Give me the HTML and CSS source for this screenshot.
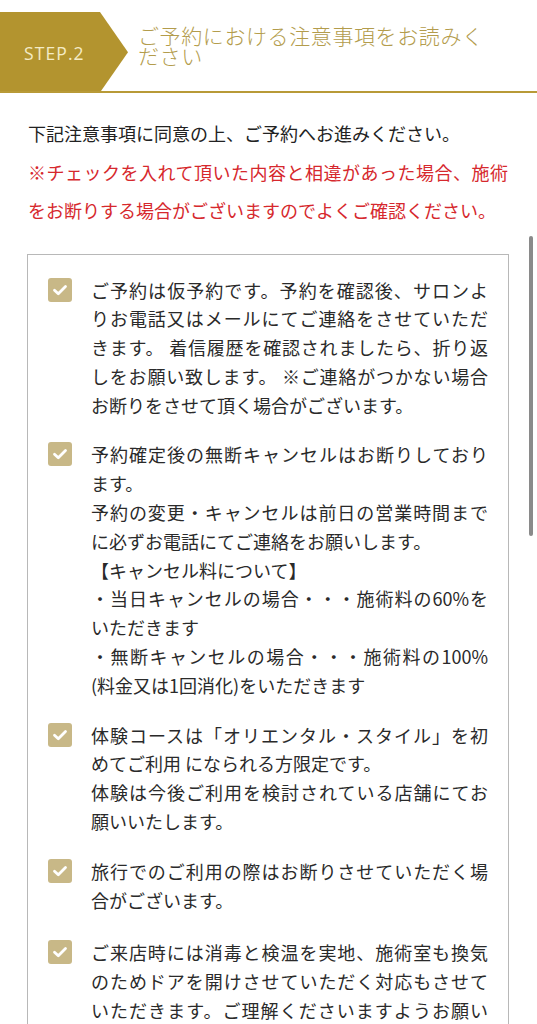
FILE: index.html
```html
<!DOCTYPE html>
<html lang="ja">
<head>
<meta charset="utf-8">
<title>STEP.2</title>
<link rel="stylesheet" href="styles.css">
</head>
<body>
<header class="step">
  <div class="badge">STEP.2</div>
  <h1 class="title">ご予約における注意事項をお読みください</h1>
</header>

<main class="content">
  <p class="intro">下記注意事項に同意の上、ご予約へお進みください。</p>
  <p class="note">※チェックを入れて頂いた内容と相違があった場合、施術をお断りする場合がございますのでよくご確認ください。</p>

  <div class="terms">
    <label class="item">
      <span class="check"><svg viewBox="0 0 24 24" width="24" height="24"><path d="M6.5 12.2 L10.3 15.8 L17.5 8.6" fill="none" stroke="#fff" stroke-width="2.8" stroke-linecap="round" stroke-linejoin="round"/></svg></span>
      <span class="text">
        <span class="ln">ご予約は仮予約です。予約を確認後、サロンよ</span>
        <span class="ln">りお電話又はメールにてご連絡をさせていただ</span>
        <span class="ln">きます。 着信履歴を確認されましたら、折り返</span>
        <span class="ln">しをお願い致します。 ※ご連絡がつかない場合</span>
        <span class="ln end">お断りをさせて頂く場合がございます。</span>
      </span>
    </label>

    <label class="item">
      <span class="check"><svg viewBox="0 0 24 24" width="24" height="24"><path d="M6.5 12.2 L10.3 15.8 L17.5 8.6" fill="none" stroke="#fff" stroke-width="2.8" stroke-linecap="round" stroke-linejoin="round"/></svg></span>
      <span class="text">
        <span class="ln">予約確定後の無断キャンセルはお断りしており</span>
        <span class="ln end">ます。</span>
        <span class="ln">予約の変更・キャンセルは前日の営業時間まで</span>
        <span class="ln end">に必ずお電話にてご連絡をお願いします。</span>
        <span class="ln end">【キャンセル料について】</span>
        <span class="ln">・当日キャンセルの場合・・・施術料の60%を</span>
        <span class="ln end">いただきます</span>
        <span class="ln">・無断キャンセルの場合・・・施術料の100%</span>
        <span class="ln end">(料金又は1回消化)をいただきます</span>
      </span>
    </label>

    <label class="item">
      <span class="check"><svg viewBox="0 0 24 24" width="24" height="24"><path d="M6.5 12.2 L10.3 15.8 L17.5 8.6" fill="none" stroke="#fff" stroke-width="2.8" stroke-linecap="round" stroke-linejoin="round"/></svg></span>
      <span class="text">
        <span class="ln">体験コースは「オリエンタル・スタイル」を初</span>
        <span class="ln end">めてご利用 になられる方限定です。</span>
        <span class="ln">体験は今後ご利用を検討されている店舗にてお</span>
        <span class="ln end">願いいたします。</span>
      </span>
    </label>

    <label class="item">
      <span class="check"><svg viewBox="0 0 24 24" width="24" height="24"><path d="M6.5 12.2 L10.3 15.8 L17.5 8.6" fill="none" stroke="#fff" stroke-width="2.8" stroke-linecap="round" stroke-linejoin="round"/></svg></span>
      <span class="text">
        <span class="ln">旅行でのご利用の際はお断りさせていただく場</span>
        <span class="ln end">合がございます。</span>
      </span>
    </label>

    <label class="item">
      <span class="check"><svg viewBox="0 0 24 24" width="24" height="24"><path d="M6.5 12.2 L10.3 15.8 L17.5 8.6" fill="none" stroke="#fff" stroke-width="2.8" stroke-linecap="round" stroke-linejoin="round"/></svg></span>
      <span class="text">
        <span class="ln">ご来店時には消毒と検温を実地、施術室も換気</span>
        <span class="ln">のためドアを開けさせていただく対応もさせて</span>
        <span class="ln">いただきます。ご理解くださいますようお願い</span>
        <span class="ln end">いたします。</span>
      </span>
    </label>
  </div>
</main>

<div class="scroll-indicator"></div>
</body>
</html>
```

FILE: styles.css
```css
html, body {
  margin: 0;
  padding: 0;
  background: #fff;
}

body {
  position: relative;
  font-family: "Noto Sans CJK JP", "Noto Sans", sans-serif;
  color: #262626;
}

/* ---------- step header ---------- */
.step {
  display: flex;
  margin-top: 12px;
  height: 79px;
  border-bottom: 2px solid #b89a37;
}

.badge {
  flex: 0 0 128px;
  display: flex;
  align-items: center;
  padding-left: 24px;
  padding-top: 2px;
  box-sizing: border-box;
  background: #b3942f;
  clip-path: polygon(0 0, 100px 0, 128px 51%, 101px 100%, 0 100%);
  color: #f4ebc6;
  font-family: "Open Sans", "Liberation Sans", sans-serif;
  font-size: 17.5px;
  letter-spacing: 1.1px;
}

.title {
  align-self: center;
  margin: 0 0 0 10px;
  padding-bottom: 14px;
  max-width: 356px;
  font-family: "Noto Sans CJK JP", sans-serif;
  font-weight: 300;
  font-size: 21px;
  line-height: 20px;
  letter-spacing: 0.6px;
  color: #b39c4c;
}

/* ---------- content ---------- */
.content {
  padding: 0 28px 40px 27px;
}

.intro,
.note {
  margin: 0;
  padding: 0 1px;
  font-size: 18px;
  line-height: 38.5px;
  text-align: justify;
}

.intro {
  margin-top: 21px;
  color: #222;
}

.note {
  color: #d6282d;
}

.terms {
  margin-top: 24px;
  border: 1px solid #b8b8b8;
  padding: 21px 20px 20px;
  display: flex;
  flex-direction: column;
  gap: 21px;
}

.item {
  display: flex;
  gap: 19px;
  align-items: flex-start;
}

.item:last-child {
  margin-top: 3px;
}

.check {
  flex: 0 0 24px;
  width: 24px;
  height: 24px;
  margin-top: 2px;
  border-radius: 3px;
  background: #c8b887;
  display: flex;
}

.text {
  flex: 1;
  font-size: 18px;
  line-height: 28.8px;
  color: #2a2a2a;
}

.ln {
  display: block;
  white-space: nowrap;
  text-align: justify;
  text-align-last: justify;
}

.ln.end {
  text-align-last: left;
}

/* overlay scroll indicator */
.scroll-indicator {
  position: absolute;
  left: 529px;
  top: 236px;
  width: 4px;
  height: 300px;
  border-radius: 2px;
  background: #8a8a8a;
}
```
